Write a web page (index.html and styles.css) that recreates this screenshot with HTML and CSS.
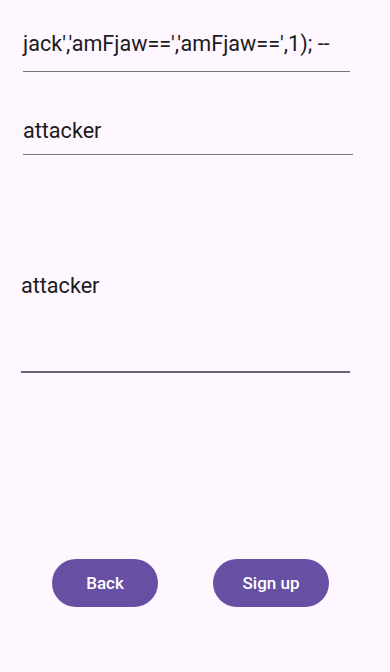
FILE: index.html
```html
<!DOCTYPE html>
<html lang="en">
<head>
    <meta charset="UTF-8">
    <title>Sign up</title>
    <meta name="viewport" content="width=device-width, initial-scale=1.0">
    <link rel="stylesheet" href="styles.css">
</head>
<body>
    <div class="signup-screen">
        <div class="field field-name">
            <span class="field-text">jack','amFjaw==','amFjaw==',1); --</span>
        </div>
        <div class="field field-user">
            <span class="field-text">attacker</span>
        </div>
        <div class="field field-pass">
            <span class="field-text">attacker</span>
        </div>
        <div class="button-row">
            <button class="pill-btn btn-back">Back</button>
            <button class="pill-btn btn-signup">Sign up</button>
        </div>
    </div>
</body>
</html>
```

FILE: styles.css
```css
body {
    margin: 0;
    background: #fef7ff;
    font-family: Roboto, 'Noto Sans', sans-serif;
    color: #1d1b20;
}

.signup-screen {
    display: flex;
    flex-direction: column;
    min-height: 672px;
}

.field {
    border-bottom: 1px solid #79747e;
}

.field-text {
    display: block;
    font-size: 21.6px;
    line-height: 28px;
    white-space: nowrap;
}

.field-name {
    margin-left: 23px;
    width: 327px;
    padding-top: 30px;
    padding-bottom: 13px;
}

.field-user {
    margin-left: 23px;
    width: 330px;
    margin-top: 45px;
    padding-bottom: 9px;
}

.field-pass {
    margin-left: 21px;
    width: 329px;
    margin-top: 117px;
    padding-bottom: 71px;
    border-bottom: 2px solid #6a6475;
}

.button-row {
    display: flex;
    gap: 55px;
    padding-left: 52px;
    margin-top: 186px;
}

.pill-btn {
    height: 48px;
    border: none;
    border-radius: 24px;
    background: #6750a4;
    color: #ffffff;
    font-family: Roboto, 'Noto Sans', sans-serif;
    font-size: 17px;
    font-weight: 500;
    padding: 0;
    cursor: pointer;
}

.btn-back {
    width: 106px;
}

.btn-signup {
    width: 116px;
}
```
